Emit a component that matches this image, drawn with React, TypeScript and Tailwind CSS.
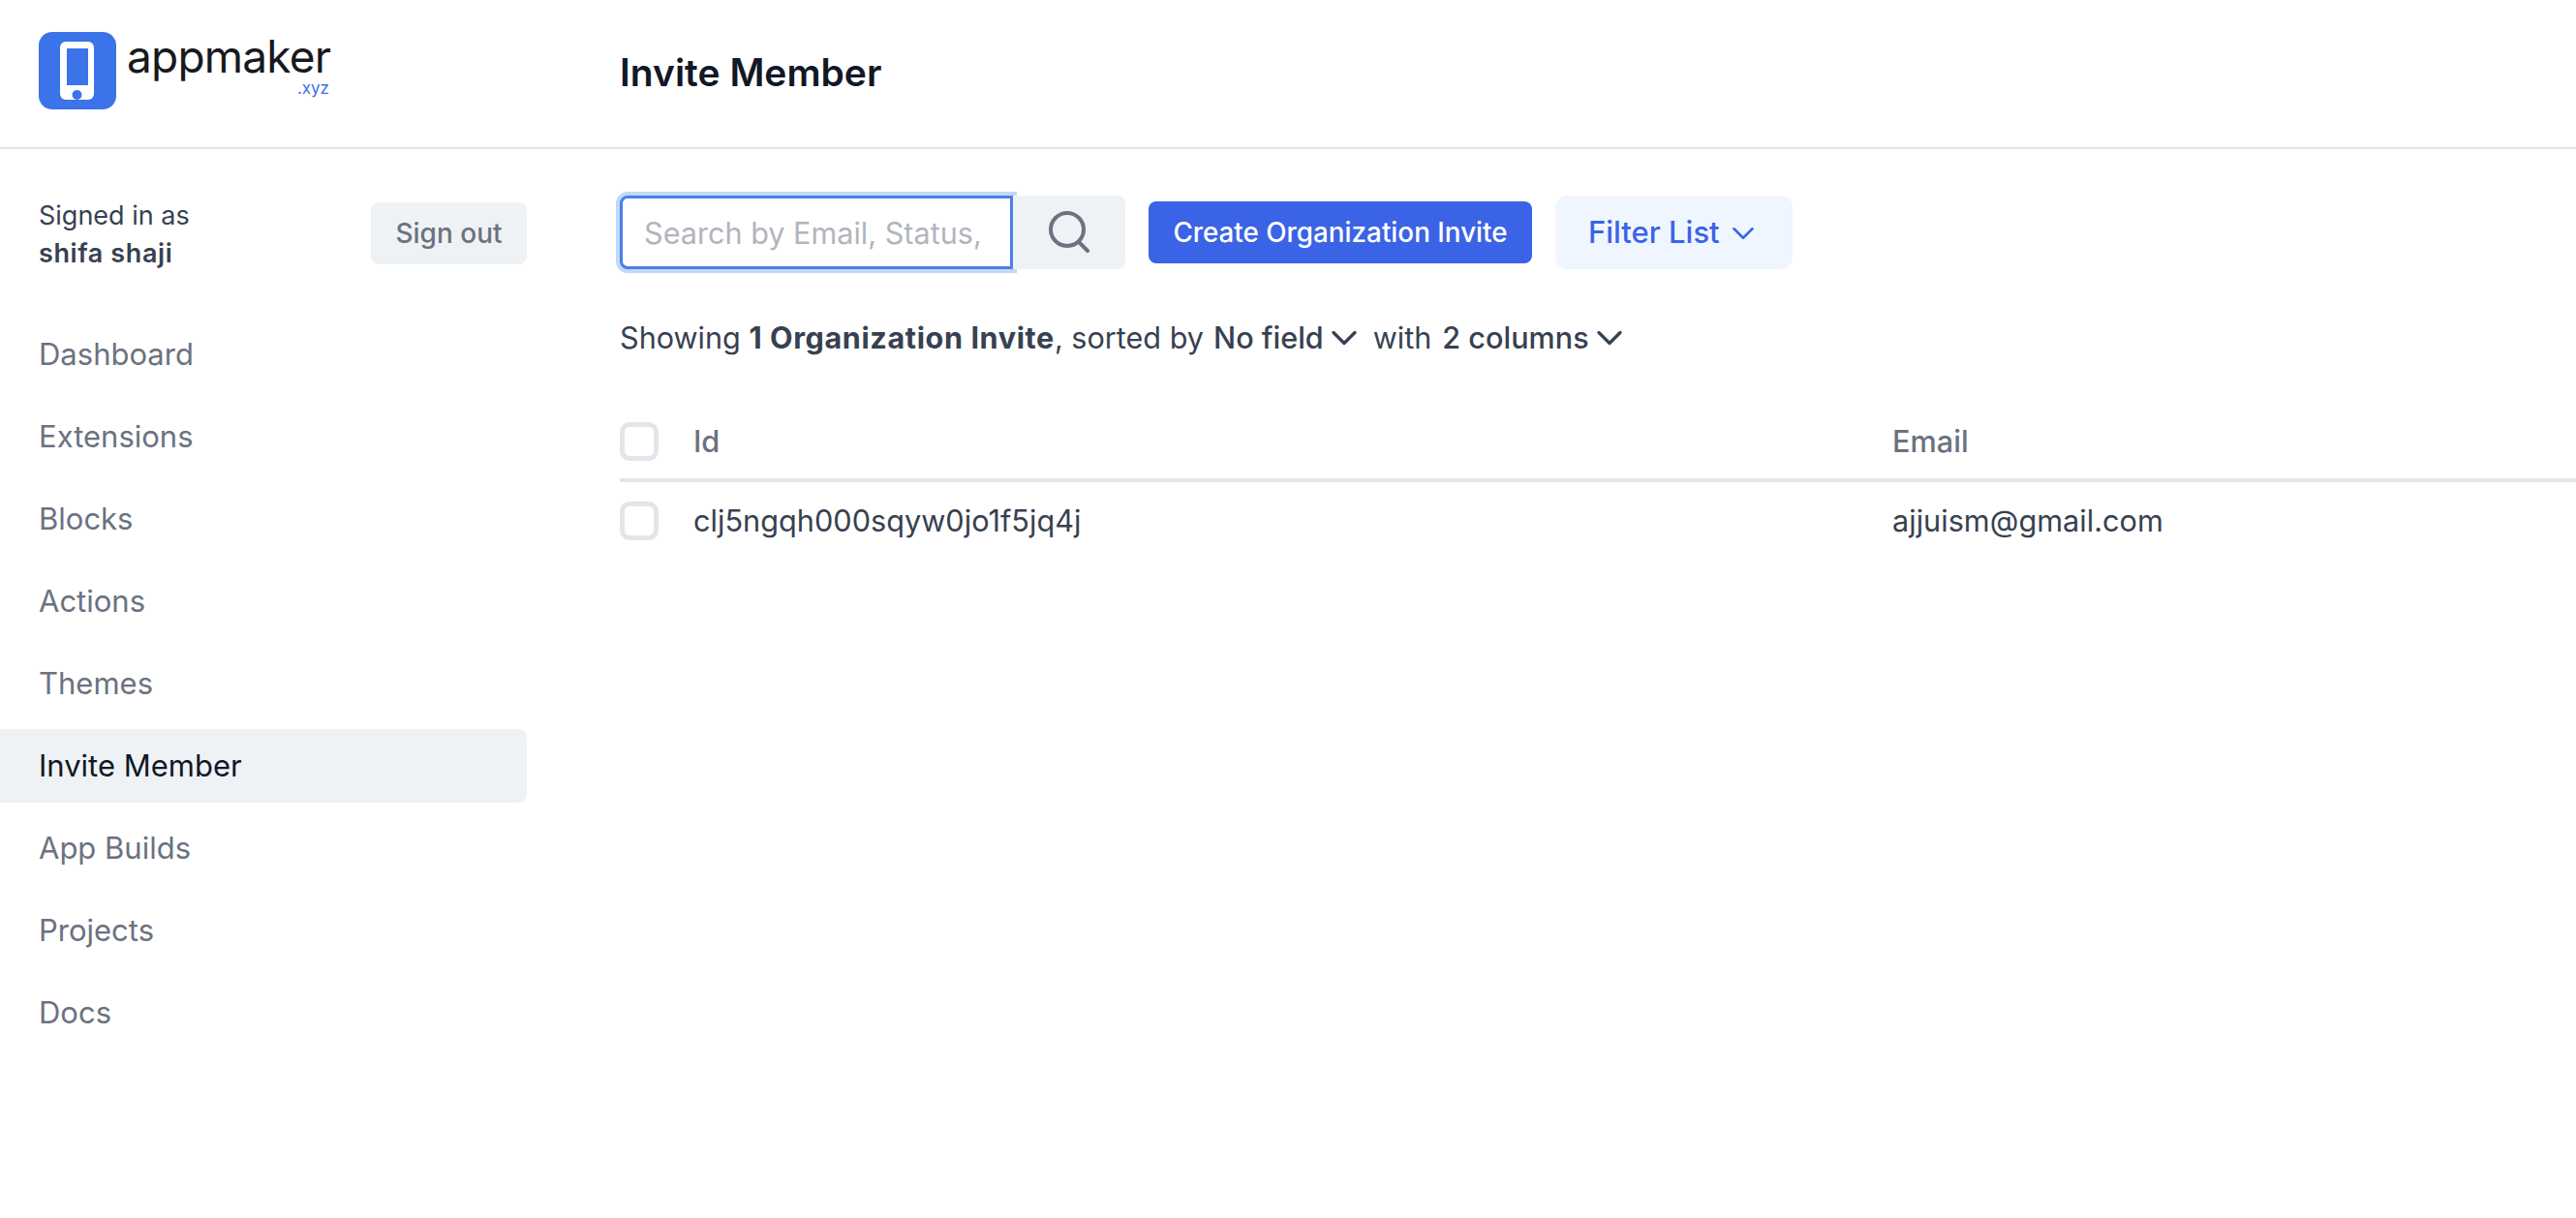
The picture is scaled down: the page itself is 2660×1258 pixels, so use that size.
import { ChevronDown } from 'lucide-react'

const navItems = ['Dashboard', 'Extensions', 'Blocks', 'Actions', 'Themes', 'Invite Member', 'App Builds', 'Projects', 'Docs']

function Logo() {
  return (
    <div className="flex items-start">
      <svg width="80" height="80" viewBox="0 0 80 80" className="shrink-0">
        <rect width="80" height="80" rx="14" fill="#3b73e8" />
        <rect x="22" y="10" width="35" height="60" rx="6" fill="#ffffff" />
        <rect x="29" y="17" width="22" height="38" fill="#3b73e8" />
        <circle cx="39.5" cy="65" r="5" fill="#3b73e8" />
      </svg>
      <div className="ml-[11px] flex w-[209px] flex-col items-end">
        <span className="block w-full text-[46px] leading-[50px] tracking-[-0.8px] text-[#17191c]">appmaker</span>
        <span className="text-[17px] leading-[16px] text-[#3b73e8]">.xyz</span>
      </div>
    </div>
  )
}

function Sidebar() {
  return (
    <aside className="w-[640px] shrink-0">
      <div className="flex w-[544px] items-start justify-between pl-10 pt-12">
        <div className="pt-px text-[27px] leading-[39px] text-[#374151]">
          <div>Signed in as</div>
          <div className="font-semibold tracking-[0.6px]">shifa shaji</div>
        </div>
        <button className="mt-[7px] h-16 w-[161px] rounded-lg bg-[#eff2f5] text-[28px] font-medium text-[#6b7280]">Sign out</button>
      </div>
      <nav className="mt-[47px] flex w-[544px] flex-col gap-[9px]">
        {navItems.map((item) => (
          <a
            key={item}
            className={
              item === 'Invite Member'
                ? 'flex h-[76px] items-center rounded-r-lg bg-[#eff2f5] pl-10 text-[31px] font-[420] text-[#111827]'
                : 'flex h-[76px] items-center pl-10 text-[31px] font-[420] text-[#6b7280]'
            }
          >
            {item}
          </a>
        ))}
      </nav>
    </aside>
  )
}

function Toolbar() {
  return (
    <div className="flex items-center">
      <div className="flex h-[76px] w-[406px] items-center rounded-l-lg border-[3px] border-[#4c7ee8] bg-white pl-[22px] pt-0.5 text-[30.6px] text-[#b1b5bd] shadow-[0_0_0_4px_#c1d9f8]">
        Search by Email, Status,
      </div>
      <button className="flex h-[76px] w-[116px] items-center justify-center rounded-r-lg bg-[#eff2f5]">
        <svg width="46" height="46" viewBox="0 0 46 46" fill="none" stroke="#6b7280" strokeWidth="4" strokeLinecap="round">
          <circle cx="21" cy="20" r="17" />
          <path d="M33 33l9 9" />
        </svg>
      </button>
      <button className="ml-6 h-16 w-[396px] rounded-lg bg-[#3b63e5] pt-0.5 text-[27.8px] font-medium text-white">Create Organization Invite</button>
      <button className="ml-6 flex h-[76px] w-[245px] items-center rounded-xl bg-[#eff6ff] pl-[34px] pt-px text-[31px] font-medium text-[#3b63e5]">
        Filter List
        <ChevronDown size={38} strokeWidth={1.6} className="ml-[5px]" />
      </button>
    </div>
  )
}

function Summary() {
  return (
    <div className="mt-[49px] flex h-11 items-center text-[30.6px] text-[#374151]">
      <span>Showing <span className="font-bold tracking-[0.6px]">1 Organization Invite</span>, sorted by</span>
      <span className="ml-2.5 flex items-center font-medium">No field<ChevronDown size={44} strokeWidth={1.8} className="-ml-px" /></span>
      <span className="ml-2">with</span>
      <span className="ml-[11px] flex items-center font-medium">2 columns<ChevronDown size={44} strokeWidth={1.8} className="-ml-px" /></span>
    </div>
  )
}

function Checkbox() {
  return <span className="block h-10 w-10 shrink-0 rounded-[10px] border-[5px] border-[#e2e6ea] bg-white" />
}

function MembersTable() {
  return (
    <div className="mt-[55px]">
      <div className="flex h-[72px] items-center border-b-4 border-[#e2e6ea] pb-2 text-[30.7px] font-medium text-[#6b7280]">
        <Checkbox />
        <span className="ml-9 w-[1238px]">Id</span>
        <span>Email</span>
      </div>
      <div className="flex h-[80px] items-center text-[30.7px] text-[#374151]">
        <Checkbox />
        <span className="ml-9 w-[1238px]">clj5ngqh000sqyw0jo1f5jq4j</span>
        <span>ajjuism@gmail.com</span>
      </div>
    </div>
  )
}

export default function App() {
  return (
    <div className="h-[1258px] w-[2660px] overflow-hidden bg-white font-['Inter',sans-serif]">
      <header className="flex h-[154px] items-center border-b-2 border-[#e2e6ea]">
        <div className="w-[640px] shrink-0 pb-[7px] pl-10">
          <Logo />
        </div>
        <h1 className="pb-0.5 text-[39px] font-semibold text-[#111827]">Invite Member</h1>
      </header>
      <div className="flex">
        <Sidebar />
        <main className="min-w-0 flex-1 pt-12">
          <Toolbar />
          <Summary />
          <MembersTable />
        </main>
      </div>
    </div>
  )
}
